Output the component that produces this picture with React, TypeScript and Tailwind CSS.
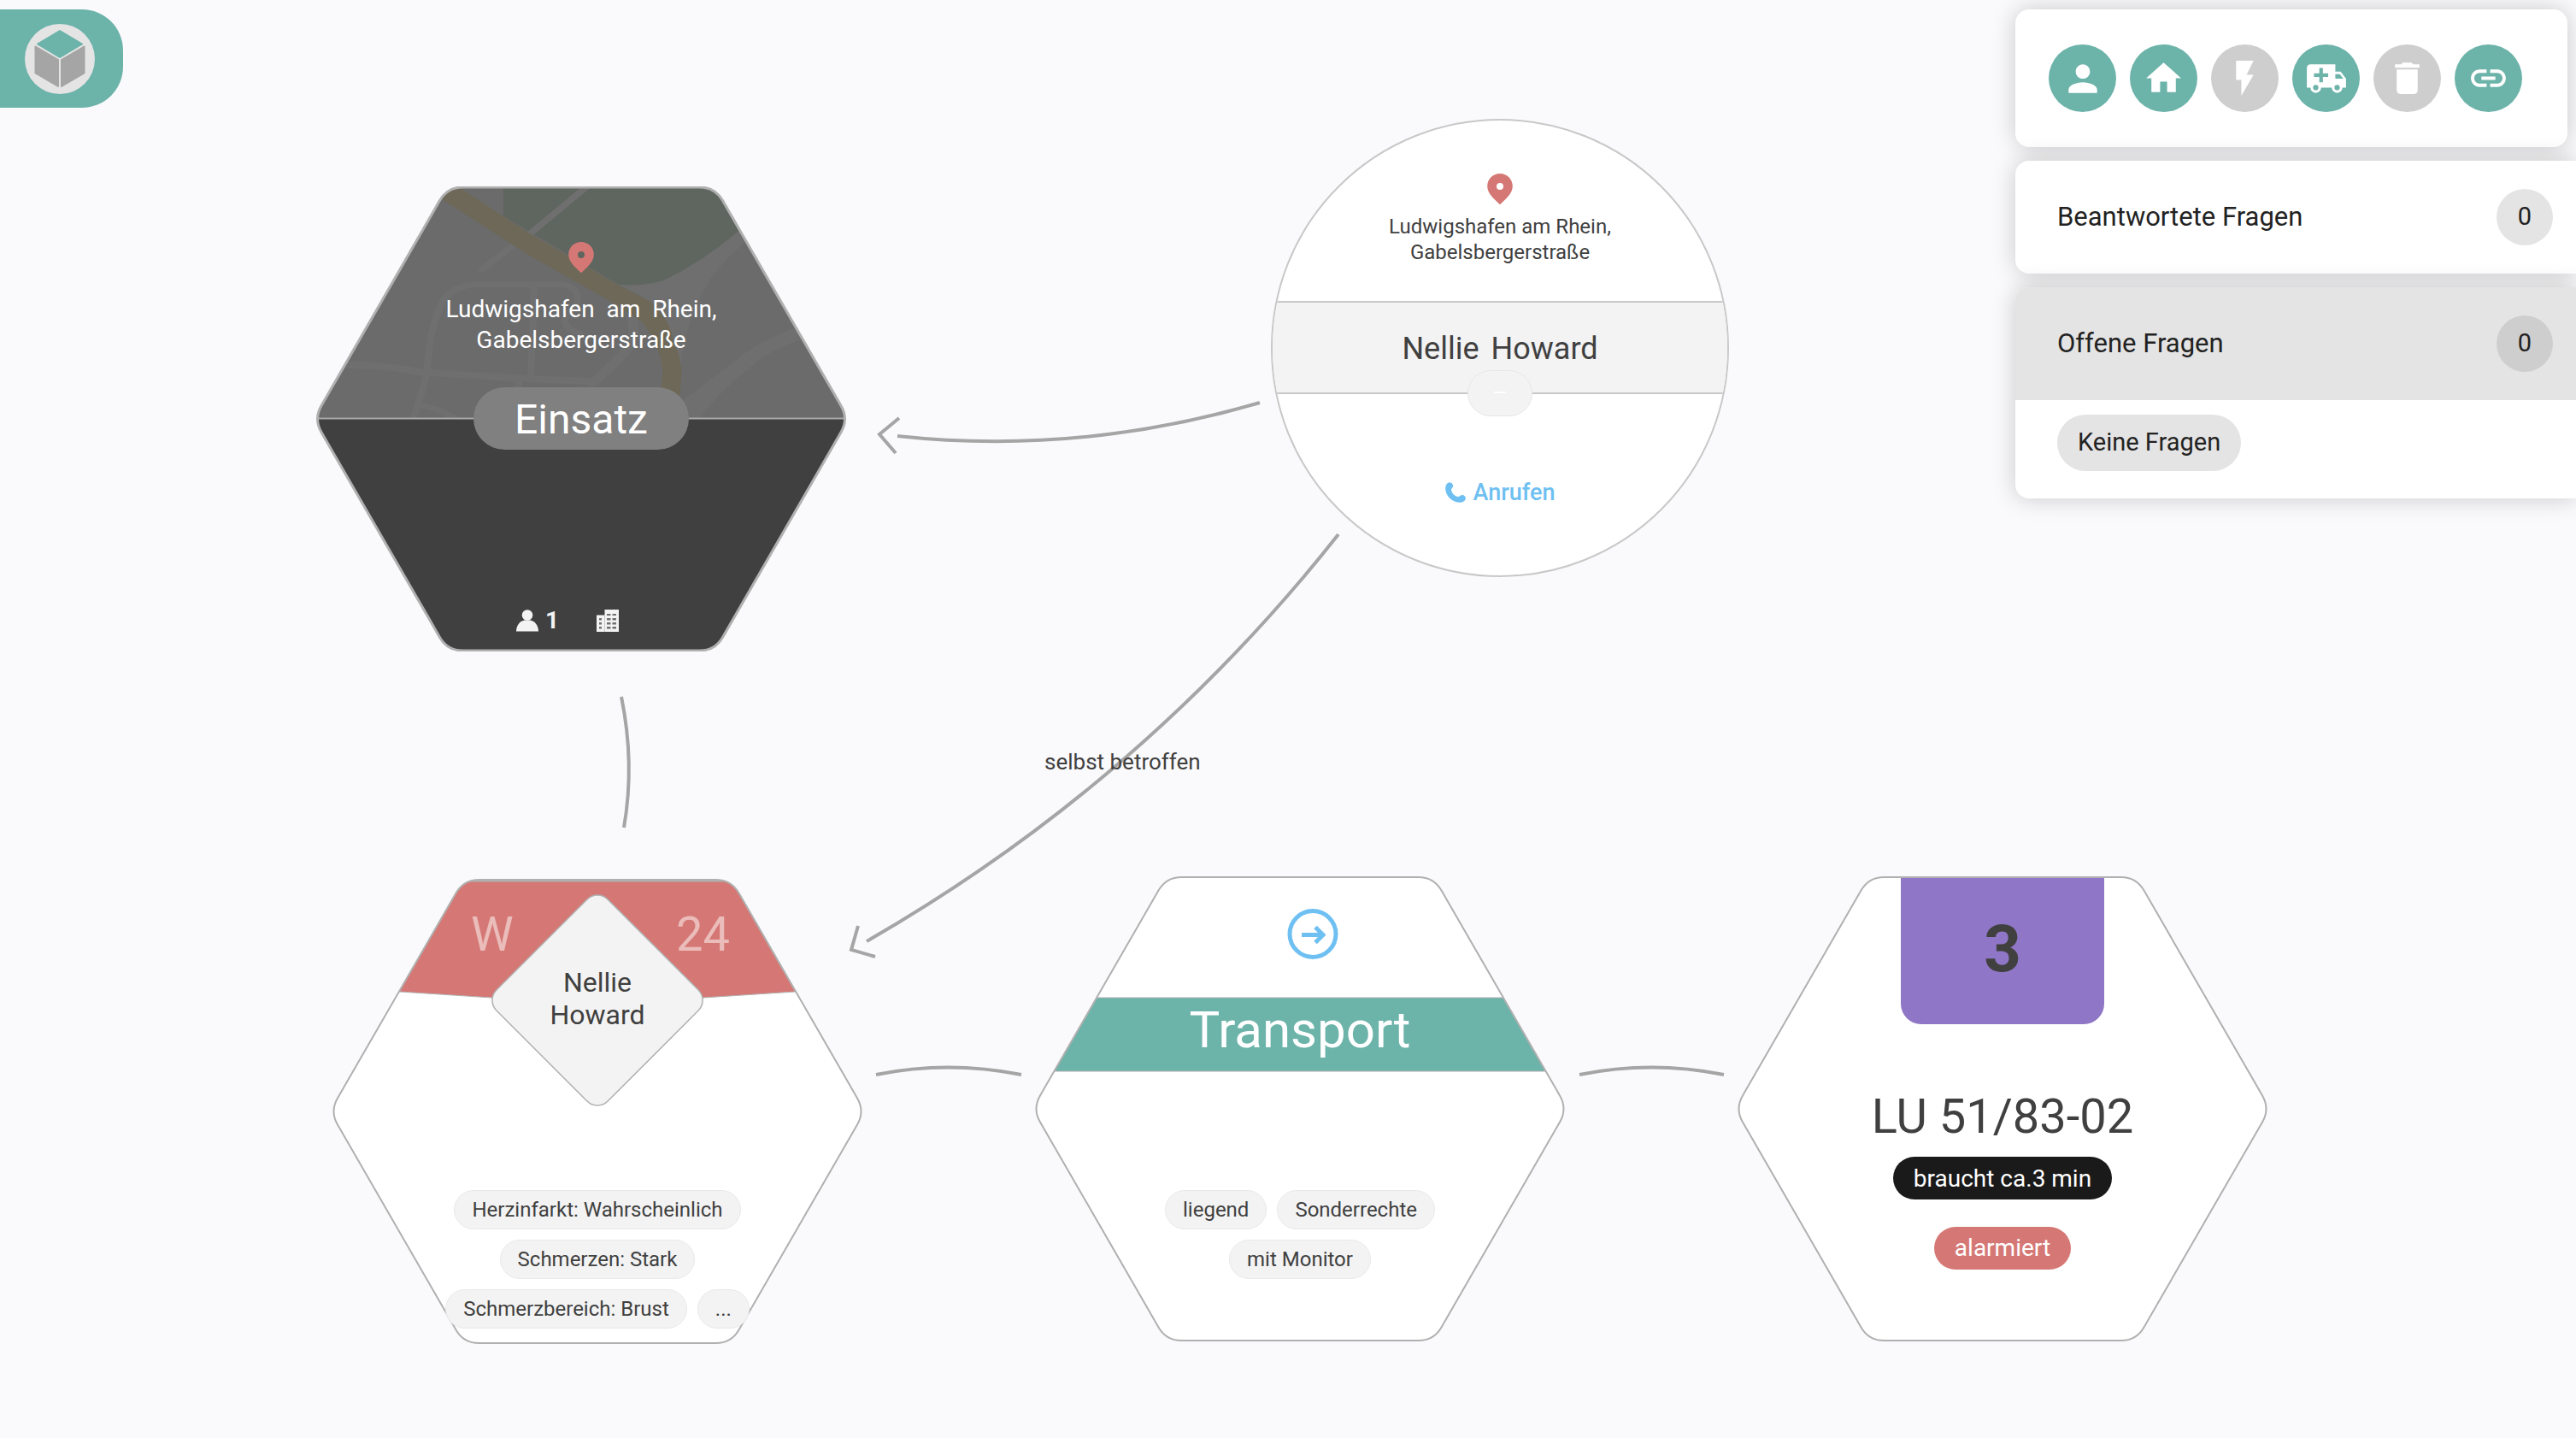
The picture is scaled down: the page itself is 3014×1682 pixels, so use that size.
import type { ReactNode } from "react";
import { MdPerson, MdHome, MdFlashOn, MdDelete, MdLink } from "react-icons/md";

const HEX =
  "M175.5 1H452.5Q470.5 1 479.5 16.6L618 256.4Q627 272 618 287.6L479.5 527.4Q470.5 543 452.5 543H175.5Q157.5 543 148.5 527.4L10 287.6Q1 272 10 256.4L148.5 16.6Q157.5 1 175.5 1Z";

function Logo() {
  return (
    <svg viewBox="0 0 82 82" className="size-[82px]" aria-hidden="true">
      <circle cx="41" cy="41" r="41" fill="#e4e4e4" />
      <g strokeLinejoin="round" strokeWidth="2">
        <path d="M41 8L67 23.5L41 39L15 23.5Z" fill="#6cb3aa" stroke="#6cb3aa" />
        <path d="M12.5 26.5L39 42V73L12.5 57.5Z" fill="#a5a5a5" stroke="#a5a5a5" />
        <path d="M69.5 26.5L43 42V73L69.5 57.5Z" fill="#a5a5a5" stroke="#a5a5a5" />
      </g>
    </svg>
  );
}

function AmbulanceIcon() {
  return (
    <svg viewBox="0 0 24 24" className="size-[50px]" fill="currentColor" aria-hidden="true">
      <path d="M18,18.5A1.5,1.5 0 0,0 19.5,17A1.5,1.5 0 0,0 18,15.5A1.5,1.5 0 0,0 16.5,17A1.5,1.5 0 0,0 18,18.5M19.5,9.5H17V12H21.46L19.5,9.5M6,18.5A1.5,1.5 0 0,0 7.5,17A1.5,1.5 0 0,0 6,15.5A1.5,1.5 0 0,0 4.5,17A1.5,1.5 0 0,0 6,18.5M20,8L23,12V17H21A3,3 0 0,1 18,20A3,3 0 0,1 15,17H9A3,3 0 0,1 6,20A3,3 0 0,1 3,17H1V6C1,4.89 1.89,4 3,4H17V8H20M8,6V9H5V11H8V14H10V11H13V9H10V6H8Z" />
    </svg>
  );
}

function PinIcon() {
  return (
    <svg viewBox="0 0 30 36" className="h-9 w-[30px]" aria-hidden="true">
      <path
        fillRule="evenodd"
        fill="#d57875"
        d="M15 0C6.7 0 .2 6.6 .2 14.8C.2 23.5 8 29.5 13.8 35.3Q15 36.6 16.2 35.3C22 29.5 29.8 23.5 29.8 14.8C29.8 6.6 23.3 0 15 0ZM15 11A4 4 0 1 1 15 19A4 4 0 1 1 15 11Z"
      />
    </svg>
  );
}

function PhoneIcon() {
  return (
    <svg viewBox="0 0 24 24" className="size-6" fill="currentColor" aria-hidden="true">
      <path d="M5 .3C7.500 .3 9.200 2.500 9.200 4.500C9.200 6.500 7 7 7 9C7.500 12.500 11 16.500 15 17C17 17 17.500 15 20 15C22.300 15 23.800 16.800 23.800 18.800C23.800 22 20.500 23.800 16.500 23.800C8 23.500 .5 16 .2 8C.2 4 2 .3 5 .3Z" />
    </svg>
  );
}

function PersonSolid() {
  return (
    <svg viewBox="0 0 26 26" className="size-[26px]" fill="#f3f3f3" aria-hidden="true">
      <circle cx="13" cy="6.5" r="6.3" />
      <path d="M0 25.5C0 18 5 13 9.500 12.500H16.500C21 13 26 18 26 25.500Z" />
    </svg>
  );
}

function BuildingIcon() {
  return (
    <svg viewBox="0 0 26 26" className="size-[26px]" aria-hidden="true">
      <path d="M0 6.500H9.500V0H26V26H0Z" fill="#f3f3f3" />
      <path d="M9.500 6.500V26" stroke="#c8c8c8" strokeWidth="1" />
      <g fill="#707070">
        <path d="M3 10h3v2.500h-3zM3 15h3v2.500h-3zM3 20h3v2.500h-3z" />
        <path d="M12 5h4.500v2h-4.500zM18.500 5h4.500v2h-4.500zM12 10h4.500v2.500h-4.500zM18.500 10h4.500v2.500h-4.500zM12 15h4.500v2.500h-4.500zM18.500 15h4.500v2.500h-4.500zM12 20h4.500v2.500h-4.500zM18.500 20h4.500v2.500h-4.500z" />
      </g>
    </svg>
  );
}

function MapBackground() {
  return (
    <g transform="matrix(.408 0 0 .3333 -6 -18)" fill="none">
      <rect x="0" y="50" width="1568" height="818" fill="#6b6b6b" />
      <path d="M561 50H1235V212Q1120 330 1020 385Q965 405 893 400L561 158Z" fill="#5f665f" />
      <path d="M893 400Q965 405 1020 385Q1130 320 1235 212L1252 252Q1180 330 1155 380Q1080 520 1070 690H1040L960 440Z" fill="#6f6f6f" />
      <g stroke="#6f6f6f" strokeWidth="20" strokeLinecap="round">
        <path d="M800 55L640 218M590 262L500 345" />
        <path d="M342 700Q352 560 370 510Q390 400 490 398H720Q785 400 772 470Q700 540 780 570" />
        <path d="M650 400L640 720" />
        <path d="M342 710L322 800L300 880M330 825Q370 830 440 880M605 745L600 780" />
        <path d="M100 680Q230 680 320 706L640 730L815 738" strokeWidth="24" />
        <path d="M815 745Q900 660 930 600Q940 560 930 520" strokeWidth="30" />
      </g>
      <path d="M1395 552Q1330 580 1270 625L1080 800L1070 868H1125Q1180 770 1310 650Q1350 620 1425 585Z" fill="#6f6f6f" />
      <path
        d="M380 95L385 50H425L560 158L640 222L890 400L990 462Q1040 530 1050 600Q1075 670 1072 720L1066 800H1012L1018 700Q1010 610 960 530L880 465L640 300Z"
        fill="#6d6858"
      />
    </g>
  );
}

function HexNode({
  place,
  fill,
  drawing,
  strokeWidth = 2,
  children,
}: {
  place: string;
  fill: string;
  drawing?: ReactNode;
  strokeWidth?: number;
  children: ReactNode;
}) {
  return (
    <article className={`absolute h-[544px] w-[628px] ${place}`}>
      <svg viewBox="0 0 628 544" className="absolute inset-0 size-full" aria-hidden="true">
        <defs>
          <clipPath id="hexagon">
            <path d={HEX} />
          </clipPath>
        </defs>
        <path d={HEX} fill={fill} />
        <g clipPath="url(#hexagon)">{drawing}</g>
        <path d={HEX} fill="none" stroke="#b0b0b0" strokeWidth={strokeWidth} />
      </svg>
      <div className="relative flex h-full flex-col items-center">{children}</div>
    </article>
  );
}

function Chip({ children }: { children: ReactNode }) {
  return (
    <li className="flex h-[46px] items-center rounded-full border border-[#e9e9e9] bg-[#f3f3f3] px-5 text-[24px] whitespace-nowrap">
      {children}
    </li>
  );
}

function ToolButton({ label, muted, children }: { label: string; muted?: boolean; children: ReactNode }) {
  return (
    <button
      type="button"
      aria-label={label}
      className={`flex size-[79px] items-center justify-center rounded-full text-white ${muted ? "bg-[#cecece]" : "bg-[#6cb3aa]"}`}
    >
      {children}
    </button>
  );
}

function Connections() {
  return (
    <svg className="absolute inset-0 size-full" fill="none" stroke="#a5a5a5" strokeWidth="4" aria-hidden="true">
      <path d="M1474 471Q1262 533 1050 510M1052 489L1029 508L1048 530" />
      <path d="M1566 625Q1336 916 1014 1101M1004 1083L996 1111L1024 1119" />
      <path d="M727 815Q743 893 730 968" />
      <path d="M1025 1257Q1109 1240 1195 1257" />
      <path d="M1848 1257Q1932 1240 2017 1257" />
    </svg>
  );
}

export default function App() {
  return (
    <div className="relative min-h-screen overflow-hidden bg-[#fafafc] font-['Roboto',sans-serif] text-[#404040]">
      <main className="absolute inset-0">
        <Connections />
        <p className="absolute top-[875px] left-[1222px] text-[26px] leading-8 whitespace-nowrap">selbst betroffen</p>

        <HexNode
          place="left-[366px] top-[218px]"
          fill="#404040"
          strokeWidth={3}
          drawing={
            <>
              <MapBackground />
              <rect x="-2" y="271.500" width="632" height="280" fill="#404040" stroke="#a8a8a8" strokeWidth="2" />
            </>
          }
        >
          <div className="mt-[65px]">
            <PinIcon />
          </div>
          <p className="mt-[25px] text-center text-[28px] leading-9 text-white">
            Ludwigshafen &nbsp;am &nbsp;Rhein,
            <br />
            Gabelsbergerstraße
          </p>
          <h2 className="mt-[37px] flex h-[73px] items-center rounded-full bg-[#808080] px-12 pt-0.5 text-[48px] text-white">Einsatz</h2>
          <div className="mt-auto mb-[18px] flex h-9 items-center gap-2.5 text-[28px] font-bold text-[#f3f3f3]">
            <span className="flex items-center gap-2 pr-[34px]">
              <PersonSolid />1
            </span>
            <span className="pr-8">
              <BuildingIcon />
            </span>
          </div>
        </HexNode>

        <article className="absolute top-[139px] left-[1487px] flex size-[536px] flex-col items-center overflow-hidden rounded-full border-2 border-[#c8c8c8] bg-white">
          <div className="mt-[62px]">
            <PinIcon />
          </div>
          <p className="mt-[11px] text-center text-[24px] leading-[30px]">
            Ludwigshafen am Rhein,
            <br />
            Gabelsbergerstraße
          </p>
          <h2 className="mt-[42px] flex h-[109px] w-full items-center justify-center gap-3.5 border-y-2 border-[#c8c8c8] bg-[#f3f3f3] pt-0.5 text-[36px]">
            <span>Nellie</span> <span>Howard</span>
          </h2>
          <span className="-mt-7 flex h-[54px] w-[76px] items-center justify-center rounded-full border border-[#e6e6e6] bg-[#f3f3f3] text-[28px] text-white">
            –
          </span>
          <a href="tel:112" className="mt-[73px] flex items-center gap-[9px] text-[27px] leading-8 font-medium text-[#6fc0f2]">
            <PhoneIcon />
            Anrufen
          </a>
        </article>

        <HexNode
          place="left-[385px] top-[1028px]"
          fill="#fff"
          drawing={
            <>
              <path d="M0 125L83 132L314 147L545 132L628 125V0H0Z" fill="#d57875" stroke="#b0b0b0" />
              <path d="M84 2H544" stroke="#b0b0b0" strokeWidth="3" />
              <rect x="222" y="50" width="184" height="184" rx="17" transform="rotate(45 314 142)" fill="#f3f3f3" stroke="#b0b0b0" strokeWidth="1.500" />
            </>
          }
        >
          <div className="mt-8 flex w-full justify-between pr-[159px] pl-[166px] text-[56px] leading-[66px] text-white/50">
            <span>W</span>
            <span>24</span>
          </div>
          <h2 className="mt-1 text-center text-[32px] leading-[38px]">
            Nellie
            <br />
            Howard
          </h2>
          <ul className="mt-[186px] flex w-[360px] flex-wrap justify-center gap-3">
            <Chip>Herzinfarkt: Wahrscheinlich</Chip>
            <Chip>Schmerzen: Stark</Chip>
            <Chip>Schmerzbereich: Brust</Chip>
            <Chip>...</Chip>
          </ul>
        </HexNode>

        <HexNode
          place="left-[1207px] top-[1025px]"
          fill="#fff"
          drawing={<rect x="-2" y="142" width="632" height="86" fill="#6cb3aa" stroke="#b0b0b0" />}
        >
          <svg viewBox="0 0 60 60" className="mt-[38px] ml-[30px] size-[60px]" fill="none" stroke="#6fc0f2" strokeWidth="5" aria-hidden="true">
            <circle cx="30" cy="29.500" r="27" />
            <path d="M17 30.500H41M33 21.500L42 30.500L33 39.500" />
          </svg>
          <h2 className="mt-11 h-[86px] text-[60px] leading-[76px] text-white">Transport</h2>
          <ul className="mt-[139px] flex w-[360px] flex-wrap justify-center gap-3">
            <Chip>liegend</Chip>
            <Chip>Sonderrechte</Chip>
            <Chip>mit Monitor</Chip>
          </ul>
        </HexNode>

        <HexNode place="left-[2029px] top-[1025px]" fill="#fff">
          <div className="mt-0.5 flex h-[171px] w-[238px] items-center justify-center rounded-b-[24px] bg-[#9076c6] pb-1.5 text-[76px] font-bold">
            3
          </div>
          <h2 className="mt-[75px] text-[56px] leading-[66px]">LU 51/83-02</h2>
          <p className="mt-3.5 flex h-[50px] items-center rounded-full bg-[#1a1a1a] px-6 pt-px text-[28px] text-white">braucht ca.3 min</p>
          <p className="mt-8 flex h-[50px] items-center rounded-full bg-[#d57875] px-6 text-[28px] text-white">alarmiert</p>
        </HexNode>
      </main>

      <div className="pointer-events-none relative flex items-start justify-between pt-[11px]">
        <button
          type="button"
          aria-label="Menü"
          className="pointer-events-auto flex h-[115px] w-[144px] items-center justify-end rounded-r-[48px] bg-[#6cb3aa] pr-[33px]"
        >
          <Logo />
        </button>

        <aside className="pointer-events-auto flex w-[656px] flex-col gap-4 text-[#222]">
          <nav className="mr-2.5 flex gap-4 rounded-2xl bg-white py-[41px] pl-[39px] shadow-[0_0_28px_rgba(0,0,0,0.2)]">
            <ToolButton label="Person">
              <MdPerson className="size-[50px]" />
            </ToolButton>
            <ToolButton label="Ort">
              <MdHome className="size-[49px]" />
            </ToolButton>
            <ToolButton label="Ereignis" muted>
              <MdFlashOn className="size-[49px]" />
            </ToolButton>
            <ToolButton label="Rettungswagen">
              <AmbulanceIcon />
            </ToolButton>
            <ToolButton label="Löschen" muted>
              <MdDelete className="size-[49px]" />
            </ToolButton>
            <ToolButton label="Verknüpfen">
              <MdLink className="size-[49px]" />
            </ToolButton>
          </nav>

          <section className="rounded-l-2xl bg-white shadow-[0_0_28px_rgba(0,0,0,0.2)]">
            <button type="button" className="flex h-[132px] w-full items-center justify-between pr-[27px] pl-[49px] text-[31px]">
              Beantwortete Fragen
              <span className="flex size-[66px] items-center justify-center rounded-full bg-[#e4e4e4] text-[29px]">0</span>
            </button>
          </section>

          <section className="overflow-hidden rounded-l-2xl bg-white pb-8 shadow-[0_0_28px_rgba(0,0,0,0.2)]">
            <button
              type="button"
              className="flex h-[132px] w-full items-center justify-between bg-[#e4e4e4] pr-[27px] pl-[49px] text-[31px]"
            >
              Offene Fragen
              <span className="flex size-[66px] items-center justify-center rounded-full bg-[#cecece] text-[29px]">0</span>
            </button>
            <p className="mt-[17px] ml-[49px] flex h-[66px] w-fit items-center rounded-full bg-[#e4e4e4] px-6 text-[29px]">Keine Fragen</p>
          </section>
        </aside>
      </div>
    </div>
  );
}
